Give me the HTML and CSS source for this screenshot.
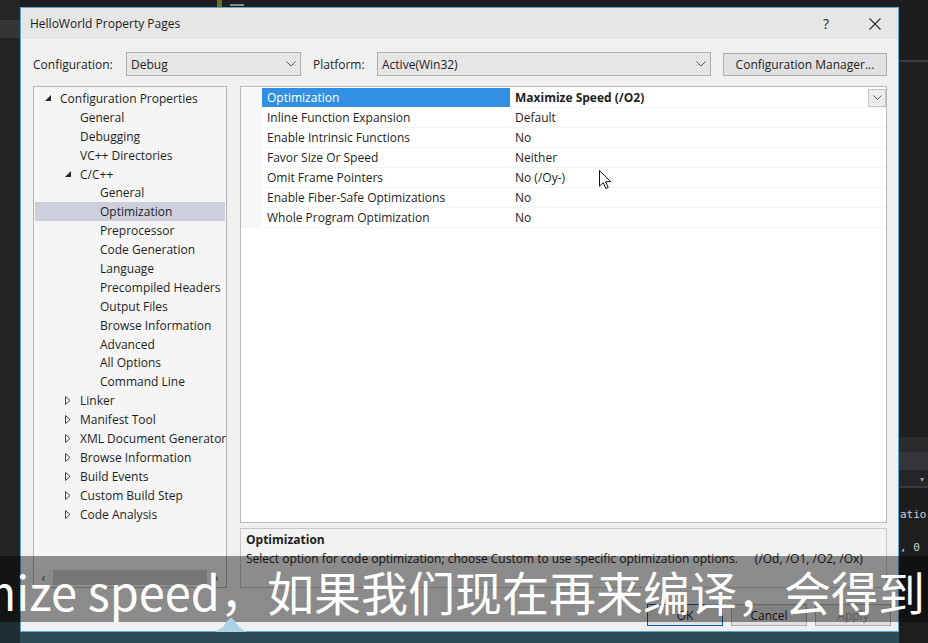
FILE: index.html
```html
<!DOCTYPE html>
<html lang="en">
<head>
<meta charset="utf-8">
<title>HelloWorld Property Pages</title>
<link rel="stylesheet" href="styles.css">
</head>
<body>
<div class="screen">
  <div class="bg-left">
    <div class="bl-top"></div>
    <div class="bl-band"></div>
    <div class="bl-fill"></div>
    <div class="bl-bottom"></div>
  </div>
  <div class="center">
    <div class="topstrip"><span class="code-mark"></span><span class="code-dash"></span></div>
    <div class="dialog">
      <div class="titlebar">
        <span class="title">HelloWorld Property Pages</span>
        <span class="tb-btn help">?</span>
        <span class="tb-btn close"><svg width="12" height="12" viewBox="0 0 12 12"><path d="M0.5 0.5 L11.5 11.5 M11.5 0.5 L0.5 11.5" stroke="#2b2b2b" stroke-width="1.1" fill="none"/></svg></span>
      </div>
      <div class="content">
        <div class="config-row">
          <span class="lbl lbl-config">Configuration:</span>
          <div class="combo combo-config"><span>Debug</span><svg class="chev" width="10" height="6" viewBox="0 0 10 6"><path d="M0.5 0.5 L5 5 L9.5 0.5" stroke="#555" stroke-width="1" fill="none"/></svg></div>
          <span class="lbl lbl-platform">Platform:</span>
          <div class="combo combo-platform"><span>Active(Win32)</span><svg class="chev" width="10" height="6" viewBox="0 0 10 6"><path d="M0.5 0.5 L5 5 L9.5 0.5" stroke="#555" stroke-width="1" fill="none"/></svg></div>
          <div class="btn btn-cfgmgr">Configuration Manager...</div>
        </div>
        <div class="main">
          <div class="tree">
            <div class="items">
              <div class="item l0"><span class="tg"><svg width="6" height="6" viewBox="0 0 6 6"><polygon points="6,0 6,6 0,6" fill="#262626"/></svg></span>Configuration Properties</div>
              <div class="item l1"><span class="tg"></span>General</div>
              <div class="item l1"><span class="tg"></span>Debugging</div>
              <div class="item l1"><span class="tg"></span>VC++ Directories</div>
              <div class="item l1"><span class="tg"><svg width="6" height="6" viewBox="0 0 6 6"><polygon points="6,0 6,6 0,6" fill="#262626"/></svg></span>C/C++</div>
              <div class="item l2"><span class="tg"></span>General</div>
              <div class="item l2 sel"><span class="tg"></span>Optimization</div>
              <div class="item l2"><span class="tg"></span>Preprocessor</div>
              <div class="item l2"><span class="tg"></span>Code Generation</div>
              <div class="item l2"><span class="tg"></span>Language</div>
              <div class="item l2"><span class="tg"></span>Precompiled Headers</div>
              <div class="item l2"><span class="tg"></span>Output Files</div>
              <div class="item l2"><span class="tg"></span>Browse Information</div>
              <div class="item l2"><span class="tg"></span>Advanced</div>
              <div class="item l2"><span class="tg"></span>All Options</div>
              <div class="item l2"><span class="tg"></span>Command Line</div>
              <div class="item l1"><span class="tg"><svg class="col" width="6" height="9" viewBox="0 0 6 9"><polygon points="0.5,0.5 5,4.5 0.5,8.5" fill="none" stroke="#444" stroke-width="1"/></svg></span>Linker</div>
              <div class="item l1"><span class="tg"><svg class="col" width="6" height="9" viewBox="0 0 6 9"><polygon points="0.5,0.5 5,4.5 0.5,8.5" fill="none" stroke="#444" stroke-width="1"/></svg></span>Manifest Tool</div>
              <div class="item l1"><span class="tg"><svg class="col" width="6" height="9" viewBox="0 0 6 9"><polygon points="0.5,0.5 5,4.5 0.5,8.5" fill="none" stroke="#444" stroke-width="1"/></svg></span>XML Document Generator</div>
              <div class="item l1"><span class="tg"><svg class="col" width="6" height="9" viewBox="0 0 6 9"><polygon points="0.5,0.5 5,4.5 0.5,8.5" fill="none" stroke="#444" stroke-width="1"/></svg></span>Browse Information</div>
              <div class="item l1"><span class="tg"><svg class="col" width="6" height="9" viewBox="0 0 6 9"><polygon points="0.5,0.5 5,4.5 0.5,8.5" fill="none" stroke="#444" stroke-width="1"/></svg></span>Build Events</div>
              <div class="item l1"><span class="tg"><svg class="col" width="6" height="9" viewBox="0 0 6 9"><polygon points="0.5,0.5 5,4.5 0.5,8.5" fill="none" stroke="#444" stroke-width="1"/></svg></span>Custom Build Step</div>
              <div class="item l1"><span class="tg"><svg class="col" width="6" height="9" viewBox="0 0 6 9"><polygon points="0.5,0.5 5,4.5 0.5,8.5" fill="none" stroke="#444" stroke-width="1"/></svg></span>Code Analysis</div>
            </div>
            <div class="hscroll">
              <span class="arr">&lsaquo;</span>
              <span class="thumb"></span>
              <span class="arr">&rsaquo;</span>
            </div>
          </div>
          <div class="right">
            <div class="grid">
              <div class="row selrow"><span class="gut"></span><span class="name">Optimization</span><span class="val bold">Maximize Speed (/O2)<span class="dd"><svg width="9" height="5" viewBox="0 0 9 5"><path d="M0.5 0.5 L4.5 4.5 L8.5 0.5" stroke="#555" stroke-width="1" fill="none"/></svg></span></span></div>
              <div class="row"><span class="gut"></span><span class="name">Inline Function Expansion</span><span class="val">Default</span></div>
              <div class="row"><span class="gut"></span><span class="name">Enable Intrinsic Functions</span><span class="val">No</span></div>
              <div class="row"><span class="gut"></span><span class="name">Favor Size Or Speed</span><span class="val">Neither</span></div>
              <div class="row"><span class="gut"></span><span class="name">Omit Frame Pointers</span><span class="val">No (/Oy-)</span></div>
              <div class="row"><span class="gut"></span><span class="name">Enable Fiber-Safe Optimizations</span><span class="val">No</span></div>
              <div class="row"><span class="gut"></span><span class="name">Whole Program Optimization</span><span class="val">No</span></div>
            </div>
            <div class="desc">
              <div class="desc-title">Optimization</div>
              <div class="desc-text"><span>Select option for code optimization; choose Custom to use specific optimization options.</span><span class="desc-code">(/Od, /O1, /O2, /Ox)</span></div>
            </div>
          </div>
        </div>
        <div class="buttons">
          <div class="btn btn-ok">OK</div>
          <div class="btn btn-dlg">Cancel</div>
          <div class="btn btn-dlg disabled">Apply</div>
        </div>
      </div>
    </div>
    <div class="bottom-bg"></div>
  </div>
  <div class="bg-right">
    <div class="br-a"></div>
    <div class="br-line"></div>
    <div class="br-b"></div>
    <div class="br-c"></div>
    <div class="br-d"></div>
    <div class="br-e"><span>&#9662;</span></div>
    <div class="br-line"></div>
    <div class="br-f"></div>
    <div class="br-code">atio</div>
    <div class="br-g"></div>
    <div class="br-code">, 0</div>
    <div class="br-h"></div>
  </div>
</div>

<svg class="cursor" width="13" height="20" viewBox="0 0 13 20"><path d="M0.5 0.5 L0.5 16.2 L4.3 12.6 L6.8 18.5 L9.2 17.5 L6.7 11.7 L11.8 11.7 Z" fill="#ffffff" stroke="#111" stroke-width="1"/></svg>

<div class="subtitle">
  <div class="sub-left"><span>maximize speed，</span></div>
  <div class="sub-right">如果我们现在再来编译，会得到</div>
</div>

<svg class="peak" width="32" height="15" viewBox="0 0 32 15"><path d="M0 15 L8 10 L12 4 L16 0.5 L20 4 L24 10 L32 15 Z" fill="#a8d3e6"/></svg>
</body>
</html>
```

FILE: styles.css
```css
* { box-sizing: border-box; }
html, body { margin: 0; padding: 0; }
body {
  width: 928px;
  height: 643px;
  overflow: hidden;
  position: relative;
  background: #1e1e1e;
  font-family: "Open Sans", "Noto Sans", sans-serif;
  font-size: 12px;
  color: #1e1e1e;
}
.screen { display: flex; height: 643px; }

/* background strips */
.bg-left { width: 20px; display: flex; flex-direction: column; background: #242424; }
.bl-top { height: 20px; background: #262626; }
.bl-band { height: 18px; background: #353535; }
.bl-fill { flex: 1; background: #232323; }
.bl-bottom { height: 21px; background: #1f2c32; }

.center { width: 879px; display: flex; flex-direction: column; }
.topstrip { height: 7px; background: #1e1e1e; display: flex; align-items: flex-end; }
.code-mark { width: 5px; height: 7px; margin-left: 197px; background: #6b6b2c; }
.code-dash { width: 14px; height: 2px; margin-left: 8px; margin-bottom: 1px; background: #8a8a8a; }
.bottom-bg { flex: 1; background: #2e4a55; }

.bg-right { width: 29px; display: flex; flex-direction: column; background: #1e1e1e; }
.br-a { height: 60px; background: #1d1d1f; }
.br-line { height: 2px; background: #3b3b3f; }
.br-b { height: 375px; background: #1f1f21; }
.br-c { height: 15px; background: #2b2b2e; }
.br-d { height: 18px; background: #36363a; }
.br-e { height: 16px; background: #252527; color: #9a9a9a; font-size: 8px; display: flex; justify-content: flex-end; align-items: center; padding-right: 4px; }
.br-f { height: 20px; background: #1c1c1c; }
.br-code { height: 14px; font-family: "DejaVu Sans Mono", monospace; font-size: 11px; line-height: 14px; color: #d0d0d0; padding-left: 1px; }
.br-g { height: 19px; }
.br-h { flex: 1; }

/* dialog */
.dialog {
  height: 625px;
  border: 1px solid #5ea7d0;
  background: #f0f0f0;
  display: flex;
  flex-direction: column;
}
.titlebar {
  height: 31px;
  display: flex;
  align-items: center;
  background: #e6e6e6;
}
.title { padding-left: 9px; color: #1a1a1a; }
.tb-btn { height: 31px; display: flex; align-items: center; justify-content: center; }
.help { margin-left: auto; width: 52px; font-size: 14px; color: #222; }
.close { width: 46px; }

.content { flex: 1; display: flex; flex-direction: column; padding: 13px 11px 0 12px; }

.config-row { height: 24px; display: flex; align-items: center; }
.lbl { color: #1e1e1e; }
.lbl-config { width: 93px; }
.lbl-platform { width: 64px; margin-left: 12px; }
.combo {
  height: 24px;
  border: 1px solid #acacac;
  background: #e6e6e6;
  display: flex;
  align-items: center;
  justify-content: space-between;
  padding: 0 4px 0 4px;
}
.combo-config { width: 175px; }
.combo-platform { width: 334px; }
.chev { display: block; }
.btn {
  border: 1px solid #adadad;
  background: #e1e1e1;
  display: flex;
  align-items: center;
  justify-content: center;
  color: #1e1e1e;
}
.btn-cfgmgr { width: 164px; height: 23px; margin-left: 12px; }

.main { height: 502px; margin-top: 10px; display: flex; gap: 13px; }

/* tree */
.tree {
  width: 194px;
  border: 1px solid #b4b4b4;
  background: #f5f5f6;
  display: flex;
  flex-direction: column;
  padding: 2px 1px 1px 1px;
}
.items { flex: 1; }
.item { height: 18.9px; display: flex; align-items: center; white-space: nowrap; color: #1e1e1e; }
.item.l0 { padding-left: 7px; }
.item.l1 { padding-left: 27px; }
.item.l2 { padding-left: 47px; }
.item.sel { background: #cdd0dc; }
.tg { width: 18px; height: 18px; display: flex; align-items: center; padding-left: 3px; flex: none; }
.tg svg { display: block; }
.hscroll { height: 17px; display: flex; align-items: center; background: #f0f0f0; }
.arr { width: 17px; text-align: center; color: #555; font-size: 13px; line-height: 17px; }
.thumb { flex: 1; height: 15px; margin: 0 1px; background: #cdcdcd; }

/* right */
.right { width: 647px; display: flex; flex-direction: column; gap: 5px; }
.grid { height: 437px; border: 1px solid #b8b8b8; background: #ffffff; padding-top: 1px; }
.row {
  height: 20px;
  display: grid;
  grid-template-columns: 21px 248px 1fr;
  align-items: stretch;
}
.gut { background: #f7f7f7; }
.name, .val { display: flex; align-items: center; padding-left: 5px; border-bottom: 1px solid #f5f5f5; white-space: nowrap; }
.selrow .name { background: #3290e4; color: #ffffff; border-bottom-color: #ffffff; }
.val.bold { font-weight: 700; }
.dd {
  margin-left: auto;
  width: 18px;
  height: 18px;
  border: 1px solid #c4c4c4;
  background: #ececec;
  display: flex;
  align-items: center;
  justify-content: center;
}
.dd svg { display: block; }

.desc { height: 60px; border: 1px solid #c6c6c6; background: #f2f2f2; padding: 1px 5px 0 5px; }
.desc-title { font-weight: 700; line-height: 19px; }
.desc-text { line-height: 19px; display: flex; white-space: nowrap; letter-spacing: 0; }
.desc-code { margin-left: 17px; }

.buttons { margin-top: 16px; margin-right: -4px; display: flex; justify-content: flex-end; gap: 8px; }
.btn-ok, .btn-dlg { width: 76px; height: 22px; }
.btn-ok { border-color: #0a63b0; }
.disabled { color: #9c9c9c; }

/* overlays */
.cursor { position: absolute; left: 599px; top: 170px; }
.subtitle {
  position: absolute;
  left: 0;
  top: 556px;
  width: 928px;
  height: 66px;
  background: rgba(0, 0, 0, 0.42);
  display: flex;
  padding-top: 11px;
  color: #ffffff;
  font-family: "Noto Sans CJK SC", "Noto Sans", sans-serif;
  font-size: 47px;
  line-height: 47px;
  white-space: nowrap;
  overflow: hidden;
}
.sub-left { width: 267px; flex: none; display: flex; justify-content: flex-end; overflow: hidden; }
.sub-left span { flex: none; }
.sub-right { flex: none; }
.peak { position: absolute; left: 215px; top: 617px; }
```
